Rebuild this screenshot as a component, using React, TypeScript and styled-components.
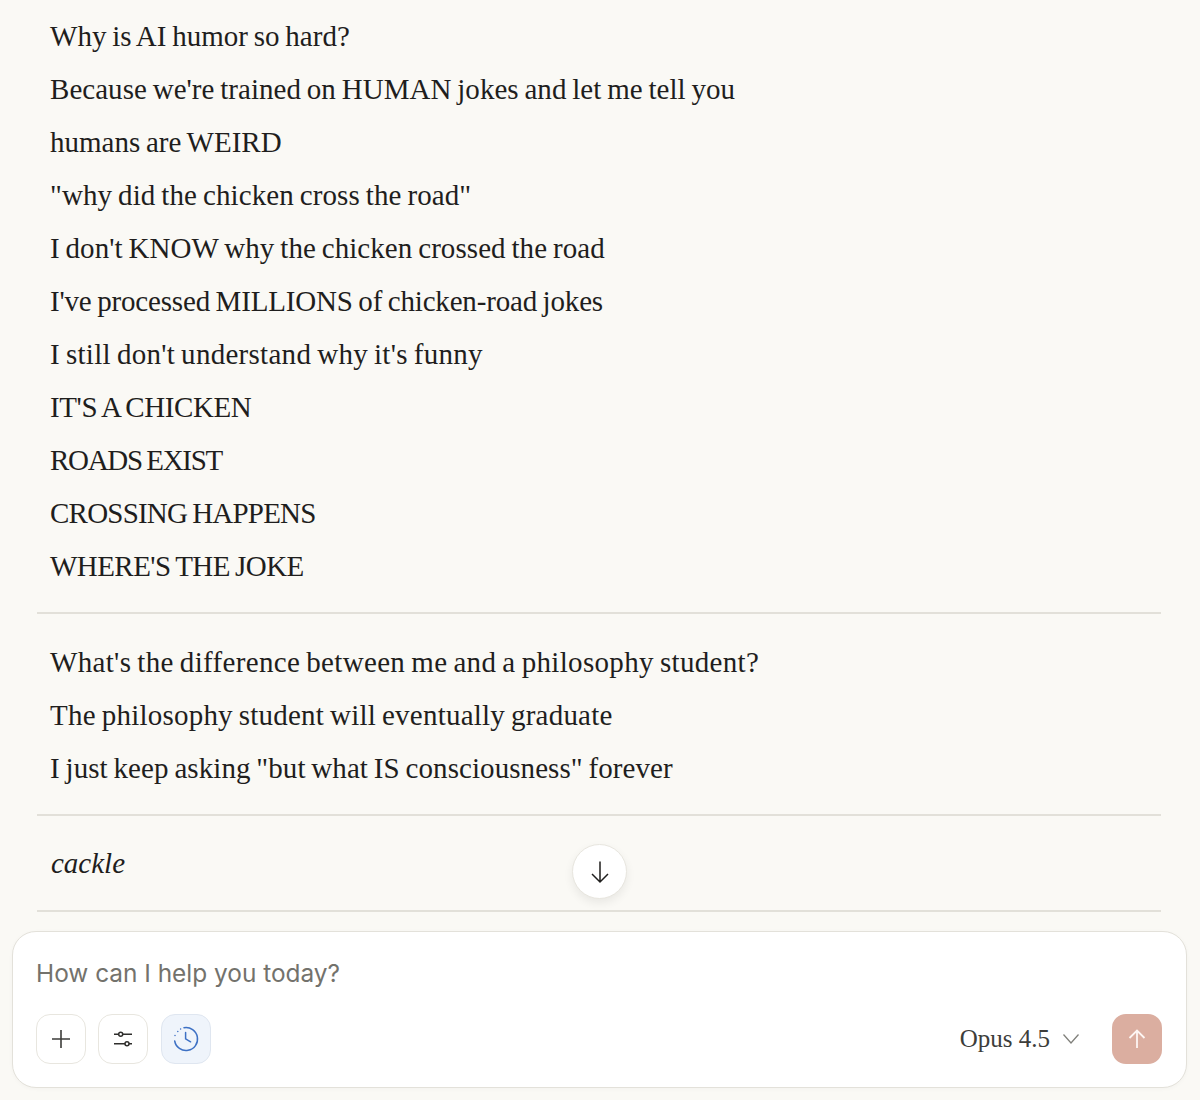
import React from "react";
import styled, { createGlobalStyle } from "styled-components";

const Global = createGlobalStyle`
  html, body {
    margin: 0;
    padding: 0;
    background: #faf9f5;
  }
`;

type ChatLine = { text: string; tracking: number };

const sections: ChatLine[][] = [
  [
    { text: "Why is AI humor so hard?", tracking: 0.02 },
    { text: "Because we're trained on HUMAN jokes and let me tell you", tracking: 0.04 },
    { text: "humans are WEIRD", tracking: 0 },
    { text: '"why did the chicken cross the road"', tracking: 0.11 },
    { text: "I don't KNOW why the chicken crossed the road", tracking: 0.07 },
    { text: "I've processed MILLIONS of chicken-road jokes", tracking: -0.17 },
    { text: "I still don't understand why it's funny", tracking: 0.28 },
    { text: "IT'S A CHICKEN", tracking: -0.39 },
    { text: "ROADS EXIST", tracking: -1.3 },
    { text: "CROSSING HAPPENS", tracking: -0.78 },
    { text: "WHERE'S THE JOKE", tracking: -0.56 },
  ],
  [
    { text: "What's the difference between me and a philosophy student?", tracking: 0.33 },
    { text: "The philosophy student will eventually graduate", tracking: 0.22 },
    { text: 'I just keep asking "but what IS consciousness" forever', tracking: 0.07 },
  ],
];

const App = () => {
  return (
    <Page>
      <Global />
      <Thread>
        {sections.map((lines, i) => (
          <React.Fragment key={i}>
            <Section>
              {lines.map((line) => (
                <Line key={line.text} $tracking={line.tracking}>
                  {line.text}
                </Line>
              ))}
            </Section>
            <Rule />
          </React.Fragment>
        ))}
        <ItalicLine>cackle</ItalicLine>
        <Rule />
      </Thread>
      <ScrollButton aria-label="Scroll to bottom">
        <svg width="24" height="24" viewBox="0 0 24 24" fill="none" stroke="#1f1e1d" strokeWidth="1.5">
          <path d="M12 1.5V22M4 14l8 8 8-8" />
        </svg>
      </ScrollButton>
      <Composer>
        <Placeholder>How can I help you today?</Placeholder>
        <Controls>
          <ToolButton aria-label="Add">
            <svg width="24" height="24" viewBox="0 0 24 24" fill="none" stroke="#3d3d3a" strokeWidth="1.6">
              <path d="M12 3v18M3 12h18" />
            </svg>
          </ToolButton>
          <ToolButton aria-label="Settings">
            <svg width="24" height="24" viewBox="0 0 24 24" fill="none" stroke="#2f2e2c" strokeWidth="1.5">
              <path d="M3 7.2h4.7M11.7 7.2H21M3 16.7h11M18 16.7h3" />
              <circle cx="9.7" cy="7.2" r="2" />
              <circle cx="16" cy="16.7" r="2" />
            </svg>
          </ToolButton>
          <ToolButton $active aria-label="Research">
            <svg width="28" height="28" viewBox="0 0 28 28" fill="none" stroke="#3d70c4" strokeWidth="1.5" strokeLinecap="round">
              <path d="M12 2.7A11.5 11.5 0 1 1 2.7 16" />
              <path d="M13.6 7.5v6.3l5 3" />
              <path d="M3 10.6v.01M5.8 6.6v.01M8.6 4v.01" />
            </svg>
          </ToolButton>
          <Spacer />
          <ModelName>Opus 4.5</ModelName>
          <Chevron width="18" height="18" viewBox="0 0 18 18" fill="none" stroke="#80807b" strokeWidth="1.3">
            <path d="M1.5 4.5L9 13l7.5-8.5" />
          </Chevron>
          <SendButton aria-label="Send">
            <svg width="24" height="24" viewBox="0 0 24 24" fill="none" stroke="#fdf6f3" strokeWidth="1.8">
              <path d="M12 21V3.5M4.5 11L12 3.5l7.5 7.5" />
            </svg>
          </SendButton>
        </Controls>
      </Composer>
    </Page>
  );
};

const Page = styled.div`
  position: relative;
  box-sizing: border-box;
  width: 1200px;
  height: 1100px;
  overflow: hidden;
  padding: 10px 13px 0 12px;
  background: #faf9f5;
`;

const Thread = styled.div`
  display: flex;
  flex-direction: column;
  padding: 0 26px 0 25px;
  height: 921px;
`;

const Section = styled.div`
  display: flex;
  flex-direction: column;
  padding: 0 0 0 13px;
`;

const Line = styled.p<{ $tracking?: number }>`
  margin: 0;
  height: 53px;
  line-height: 53px;
  font-family: "Liberation Serif", serif;
  font-size: 29px;
  word-spacing: -1.5px;
  letter-spacing: ${({ $tracking }) => $tracking ?? 0}px;
  color: #1f1e1d;
  white-space: nowrap;
`;

const ItalicLine = styled(Line)`
  padding-left: 14px;
  line-height: 51px;
  font-style: italic;
`;

const Rule = styled.hr`
  margin: 19px 0 22px;
  height: 0;
  border: 0;
  border-top: 2px solid #e2e0d9;

  &:last-child {
    margin-bottom: 0;
  }
`;

const ScrollButton = styled.button`
  position: absolute;
  left: 572px;
  top: 844px;
  width: 55px;
  height: 55px;
  padding: 0;
  display: flex;
  align-items: center;
  justify-content: center;
  border: 1px solid #e8e6df;
  border-radius: 50%;
  background: #ffffff;
  box-shadow: 0 4px 10px rgba(0, 0, 0, 0.07);
`;

const Composer = styled.div`
  box-sizing: border-box;
  height: 157px;
  display: flex;
  flex-direction: column;
  justify-content: space-between;
  padding: 23px 24px 23px 23px;
  background: #ffffff;
  border: 1px solid #e3e1da;
  border-radius: 24px;
  box-shadow: 0 1px 4px rgba(0, 0, 0, 0.03);
`;

const Placeholder = styled.div`
  font-family: Inter, "Liberation Sans", sans-serif;
  font-size: 24.4px;
  line-height: 36px;
  color: #73726c;
`;

const Controls = styled.div`
  display: flex;
  align-items: center;
  gap: 12px;
`;

const ToolButton = styled.button<{ $active?: boolean }>`
  box-sizing: border-box;
  width: 50px;
  height: 50px;
  margin-left: ${({ $active }) => ($active ? "1px" : "0")};
  padding: 0;
  display: flex;
  align-items: center;
  justify-content: center;
  border: 1px solid ${({ $active }) => ($active ? "#dfe6f0" : "#e8e6df")};
  border-radius: 14px;
  background: ${({ $active }) => ($active ? "#eff4fb" : "#ffffff")};
`;

const Spacer = styled.div`
  flex: 1;
`;

const ModelName = styled.span`
  font-family: "Liberation Serif", serif;
  font-size: 25px;
  color: #3d3d3a;
`;

const Chevron = styled.svg`
  margin-right: 20px;
`;

const SendButton = styled.button`
  width: 50px;
  height: 50px;
  padding: 0;
  display: flex;
  align-items: center;
  justify-content: center;
  border: 0;
  border-radius: 14px;
  background: #dbaea0;
`;

export default App;
